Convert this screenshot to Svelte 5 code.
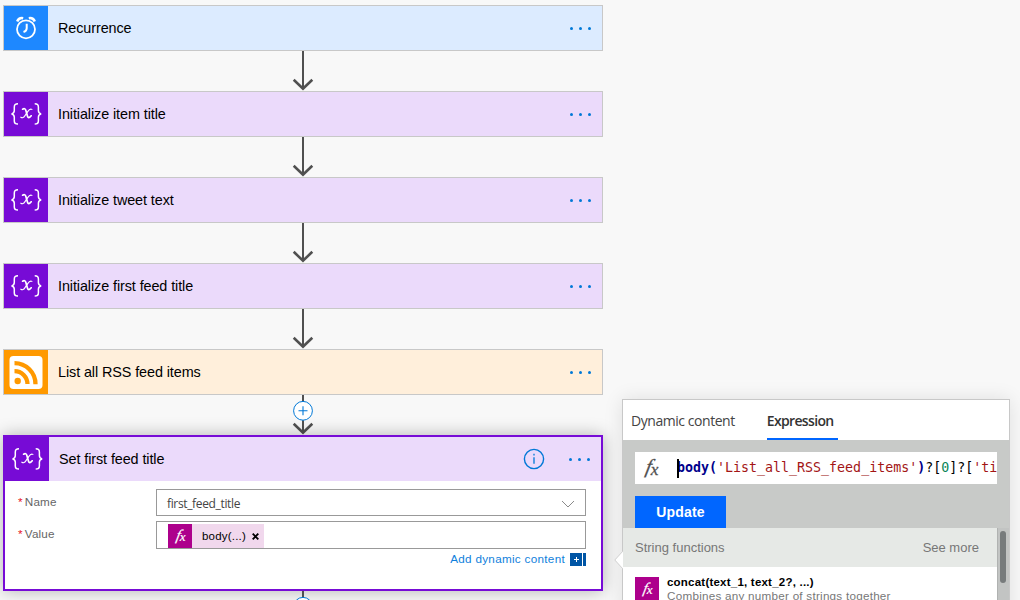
<script>
  const steps = [
    { title: 'Recurrence', kind: 'clock' },
    { title: 'Initialize item title', kind: 'variable' },
    { title: 'Initialize tweet text', kind: 'variable' },
    { title: 'Initialize first feed title', kind: 'variable' },
    { title: 'List all RSS feed items', kind: 'rss' }
  ];
</script>

{#snippet icon(kind)}
  <svg class="icon" width="44" height="44" viewBox="0 0 44 44" aria-hidden="true">
    {#if kind === 'clock'}
      <g fill="none" stroke="#fff">
        <circle cx="22" cy="23.3" r="9" stroke-width="1.8" />
        <path d="M22.7 17.8v4.4c0 2-.8 3-3.2 3.8" stroke-width="2" />
        <path d="M13.2 15.4c1-2.4 3.2-3.7 6-3.2M30.8 15.4c-1-2.4-3.2-3.7-6-3.2" stroke-width="2.5" />
      </g>
    {:else if kind === 'variable'}
      <g fill="none" stroke="#fff" stroke-width="1.5">
        <path d="M14 11.8c-2.6 0-3.7.8-3.7 3.1v3.7c0 2-.8 3-2.8 3.3 2 .3 2.8 1.3 2.8 3.3v3.7c0 2.3 1.1 3.1 3.7 3.1" />
        <path d="M30.7 11.8c2.6 0 3.7.8 3.7 3.1v3.7c0 2 .8 3 2.8 3.3-2 .3-2.8 1.3-2.8 3.3v3.7c0 2.3-1.1 3.1-3.7 3.1" />
      </g>
      <g fill="none" stroke="#fff" stroke-linecap="round">
        <path d="M18.6 17.2c1.5-.9 2.7-.6 3.2 1l1.7 6c.6 2 2 1.9 3.7-.4" stroke-width="1.7" />
        <path d="M27.9 17.4c-1.6-1-2.9.2-4.2 2.2l-2.7 4c-1.4 2.1-2.6 2.7-4.2 1.6" stroke-width="1.1" />
      </g>
    {:else}
      <rect x="5.5" y="6" width="33" height="33" rx="4" fill="#fff" />
      <circle cx="13.7" cy="31" r="3.2" fill="#ff9900" />
      <path d="M10.5 21.1a13 13 0 0 1 13 13M10.5 13.2a21 21 0 0 1 21 21" fill="none" stroke="#ff9900" stroke-width="4.3" />
    {/if}
  </svg>
{/snippet}

{#snippet dots()}
  <span class="dots"><i></i><i></i><i></i></span>
{/snippet}

{#snippet arrow(plus)}
  <svg class="arrow" width="40" height="40" viewBox="0 0 40 40" aria-hidden="true">
    <path d="M20 0v38" stroke="#505050" stroke-width="2" />
    <path d="M10.7 28.8l9.3 9 9.3-9" fill="none" stroke="#505050" stroke-width="2.6" />
    {#if plus}
      <circle cx="20" cy="15.8" r="9.4" fill="#fff" stroke="#0078d7" stroke-width="1" />
      <path d="M15.5 15.7h9M20 11.2v9" stroke="#0078d7" stroke-width="1.1" />
    {/if}
  </svg>
{/snippet}

{#snippet fx(size, color)}
  <svg class="fx" width={size} height={size} viewBox="0 0 24 24" fill={color} stroke={color} stroke-width=".2" aria-hidden="true">
    <text transform="translate(7.4 15.6) skewX(-12)" class="fxglyph" font-size="15">f</text>
    <text x="11.8" y="17.2" class="fxglyph" font-size="13">x</text>
  </svg>
{/snippet}

<main>
  <section class="flow">
    {#each steps as step, n}
      <div class="card {step.kind}">
        <div class="tile">{@render icon(step.kind)}</div>
        <span class="title">{step.title}</span>
        {@render dots()}
      </div>
      {@render arrow(n === steps.length - 1)}
    {/each}

    <div class="open">
      <header>
        <div class="tile">{@render icon('variable')}</div>
        <span class="title">Set first feed title</span>
        <svg class="info" width="22" height="22" viewBox="0 0 22 22" fill="none" stroke="#0078d7" aria-hidden="true">
          <circle cx="11" cy="11" r="9.6" stroke-width="1.4" />
          <path d="M11 9.2v6.5M11 5.8v1.6" stroke-width="1.3" />
        </svg>
        {@render dots()}
      </header>
      <div class="field">
        <span class="label"><b>*</b>Name</span>
        <div class="input select">
          <span>first_feed_title</span>
          <svg width="14" height="8" viewBox="0 0 14 8" fill="none" stroke="#8a8a8a"><path d="M1 1l6 6 6-6" /></svg>
        </div>
      </div>
      <div class="field value">
        <span class="label"><b>*</b>Value</span>
        <div class="input">
          <div class="token">
            <span class="chip">{@render fx(24, '#fff')}</span>
            <span class="tokentext">body(...)</span>
            <svg width="7" height="7" viewBox="0 0 7 7"><path d="M.7.7l5.6 5.6M6.3.7L.7 6.3" stroke="#000" stroke-width="1.9" /></svg>
          </div>
        </div>
      </div>
      <div class="add">
        <span>Add dynamic content</span>
        <svg width="16" height="13" viewBox="0 0 16 13"><path d="M0 0h12v13H0zM13 0h3v13h-3z" fill="#0055a5" /><path d="M4 6.5h5M6.5 4v5" stroke="#fff" /></svg>
      </div>
    </div>
    {@render arrow(true)}
  </section>

  <aside class="panel">
    <svg class="beak" width="9" height="18" viewBox="0 0 9 18"><path d="M9 0L.8 9 9 18" fill="#fff" stroke="#d0d0d0" /></svg>
    <nav>
      <span class="tab">Dynamic content</span>
      <span class="tab active">Expression</span>
    </nav>
    <div class="editor">
      <div class="code">
        {@render fx(32, '#505050')}
        <i class="caret"></i>
        <code><b>body(</b><em>'List_all_RSS_feed_items'</em><b>)</b>?[<u>0</u>]?[<em>'ti</em></code>
      </div>
      <button>Update</button>
    </div>
    <div class="results">
      <div class="list">
        <div class="group"><span>String functions</span><span class="more">See more</span></div>
        <div class="fn">
          <span class="chip">{@render fx(24, '#fff')}</span>
          <div>
            <strong>concat(text_1, text_2?, ...)</strong>
            <p>Combines any number of strings together</p>
          </div>
        </div>
      </div>
      <div class="track"><i></i></div>
    </div>
  </aside>
</main>

<style>
  :global(body) { background: #f8f8f8; overflow: hidden; }
  main {
    position: relative;
    width: 1020px;
    height: 600px;
    overflow: hidden;
    background: #f8f8f8;
    font-family: "Liberation Sans", Arial, sans-serif;
    color: #111;
  }
  main * { box-sizing: border-box; }
  svg { display: block; flex: none; }
  .flow { width: 600px; margin-left: 3px; padding-top: 5px; display: flex; flex-direction: column; }
  .card { flex: none; display: flex; align-items: center; height: 46px; border: 1px solid #c8c8c8; padding-right: 11px; }
  .clock { background: #dcebff; }
  .variable { background: #ebdafb; }
  .rss { background: #ffefdb; }
  .tile { width: 44px; height: 44px; flex: none; background: #770bd6; }
  .clock .tile { background: #1e88ff; }
  .rss .tile { background: #ff9900; }
  .title { flex: 1; padding-left: 10px; font-size: 14.4px; letter-spacing: -.09px; line-height: 20px; white-space: nowrap; color: #000; }
  .dots { display: flex; gap: 6px; padding-top: 1px; }
  .dots i { width: 3px; height: 3px; border-radius: 50%; background: #0078d7; }
  .arrow { align-self: center; }
  .open {
    flex: none;
    height: 156px;
    border: 2px solid #770bd6;
    background: #fff;
    box-shadow: 0 0 16px rgba(0, 0, 0, .28);
  }
  .open header { display: flex; align-items: center; height: 44px; padding-right: 11px; background: #ebdafb; }
  .open .info { margin-right: 24px; }
  .field { display: flex; padding: 8px 15px 0 13px; }
  .value { padding-top: 5px; }
  .label { width: 138px; padding-top: 5px; font-size: 11.7px; line-height: 16px; color: #666; letter-spacing: .2px; }
  .label b { font-weight: 400; color: #e81123; padding-right: 2px; }
  .input { flex: 1; height: 28px; border: 1px solid #999; padding: 2px 11px 0; }
  .select { display: flex; align-items: center; justify-content: space-between; height: 27px; padding: 2px 10px 0; font: 12px "Open Sans", sans-serif; letter-spacing: -.35px; color: #444; }
  .token { display: flex; align-items: center; width: 96px; height: 24px; background: #f1d8ed; font-size: 11.5px; letter-spacing: .2px; color: #000; }
  .chip { width: 24px; height: 24px; flex: none; background: #ad008c; }
  .fxglyph { font-family: "Liberation Serif", serif; font-style: italic; }
  .tokentext { width: 60px; padding-left: 10px; }
  .add { display: flex; justify-content: flex-end; align-items: center; gap: 5px; padding: 3px 15px 0 0; font-size: 11.7px; letter-spacing: .3px; line-height: 14px; color: #0f7fdc; }

  .panel { position: absolute; left: 622px; top: 399px; width: 388px; height: 230px; border: 1px solid #c8c8c8; background: #fff; box-shadow: 0 0 18px rgba(0, 0, 0, .1); }
  .beak { position: absolute; left: -9px; top: 151px; }
  nav { display: flex; gap: 32px; height: 40px; padding-left: 8px; font: 14px/42px "Open Sans", sans-serif; letter-spacing: -.45px; color: #444; }
  .tab { white-space: nowrap; }
  .active { font-weight: 600; width: 71px; letter-spacing: -.66px; border-bottom: 2px solid #0066ff; color: #333; }
  .editor { height: 88px; padding: 12px 12px 0; background: #c8cac8; }
  .code { display: flex; align-items: center; height: 32px; background: #fff; overflow: hidden; }
  .caret { width: 2px; height: 19px; margin-left: 10px; margin-right: -2px; flex: none; background: #000; z-index: 1; }
  code { font: 13.3px/32px "DejaVu Sans Mono", monospace; white-space: pre; color: #000; }
  code b { color: #00008b; }
  code em { color: #a31515; font-style: normal; }
  code u { color: #098658; text-decoration: none; }
  button { display: block; margin-top: 12px; width: 91px; height: 32px; padding: 0; border: 0; background: #0066ff; color: #fff; font: bold 14px "Liberation Sans", sans-serif; letter-spacing: .15px; }
  .results { display: flex; height: 101px; }
  .list { flex: 1; }
  .group { display: flex; justify-content: space-between; height: 39px; padding: 0 18px 0 12px; background: #e6e9e6; color: #777; font-size: 13px; line-height: 39px; }
  .fn { display: flex; gap: 8px; padding: 10px 12px 0; font-size: 11.5px; }
  .fn strong { display: block; margin-top: -1px; line-height: 12px; letter-spacing: .22px; color: #000; white-space: nowrap; }
  .fn p { margin: 0; line-height: 16px; font-size: 11.7px; letter-spacing: .24px; color: #777; white-space: nowrap; }
  .track { width: 12px; background: #c2c4c3; border-left: 1px solid #b0b2b1; padding: 3px 0 0 2px; }
  .track i { display: block; width: 6px; height: 52px; border-radius: 3px; background: #777b7c; }
</style>
